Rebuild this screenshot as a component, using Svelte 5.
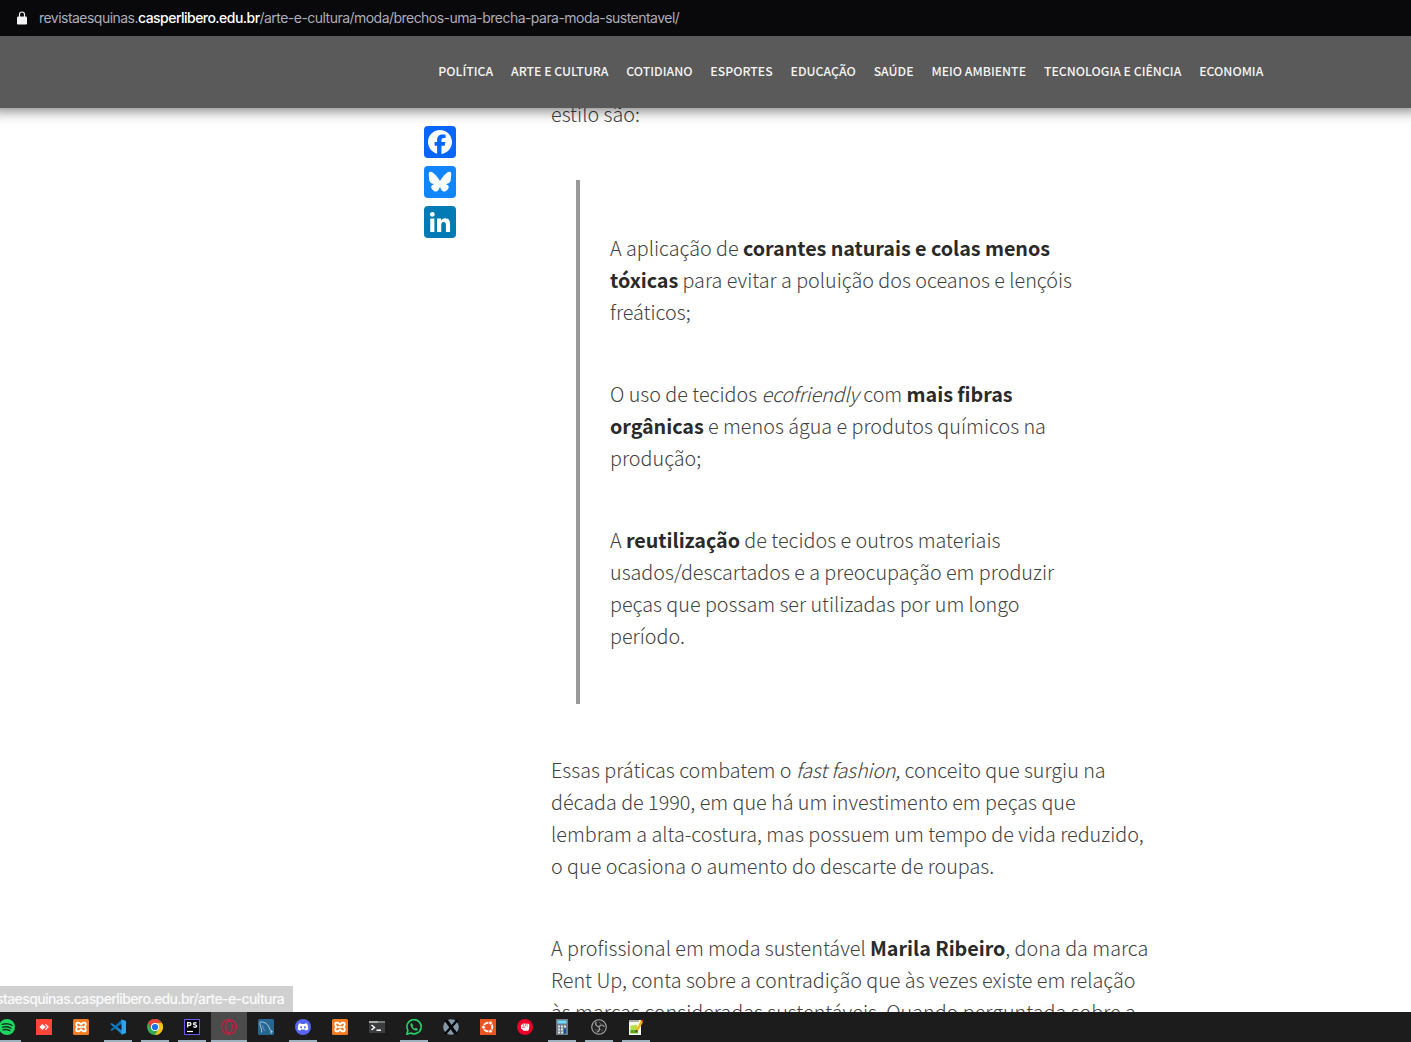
<script>
  const sections = ['Política', 'Arte e cultura', 'Cotidiano', 'Esportes', 'Educação', 'Saúde', 'Meio ambiente', 'Tecnologia e ciência', 'Economia'];

  const quote = [
    [
      [{ t: 'A aplicação de ' }, { b: 'corantes naturais e colas menos' }],
      [{ b: 'tóxicas' }, { t: ' para evitar a poluição dos oceanos e lençóis' }],
      [{ t: 'freáticos;' }]
    ],
    [
      [{ t: 'O uso de tecidos ' }, { i: 'ecofriendly' }, { t: ' com ' }, { b: 'mais fibras' }],
      [{ b: 'orgânicas' }, { t: ' e menos água e produtos químicos na' }],
      [{ t: 'produção;' }]
    ],
    [
      [{ t: 'A ' }, { b: 'reutilização' }, { t: ' de tecidos e outros materiais' }],
      [{ t: 'usados/descartados e a preocupação em produzir' }],
      [{ t: 'peças que possam ser utilizadas por um longo' }],
      [{ t: 'período.' }]
    ]
  ];

  const body = [
    [
      [{ t: 'Essas práticas combatem o ' }, { i: 'fast fashion,' }, { t: ' conceito que surgiu na' }],
      [{ t: 'década de 1990, em que há um investimento em peças que' }],
      [{ t: 'lembram a alta-costura, mas possuem um tempo de vida reduzido,' }],
      [{ t: 'o que ocasiona o aumento do descarte de roupas.' }]
    ],
    [
      [{ t: 'A profissional em moda sustentável ' }, { b: 'Marila Ribeiro' }, { t: ', dona da marca' }],
      [{ t: 'Rent Up, conta sobre a contradição que às vezes existe em relação' }],
      [{ t: 'às marcas consideradas sustentáveis. Quando perguntada sobre a' }]
    ]
  ];

  const apps = [
    { id: 'spotify', open: true },
    { id: 'anydesk' },
    { id: 'xampp' },
    { id: 'vscode', open: true },
    { id: 'chrome', open: true },
    { id: 'phpstorm', open: true },
    { id: 'opera', open: true, active: true },
    { id: 'mysql' },
    { id: 'discord', open: true },
    { id: 'xampp' },
    { id: 'terminal' },
    { id: 'whatsapp', open: true },
    { id: 'xserver' },
    { id: 'ubuntu' },
    { id: 'fist' },
    { id: 'calculator', open: true },
    { id: 'obs', open: true },
    { id: 'notepad', open: true }
  ];
</script>

{#snippet paragraph(lines)}
  <p>
    {#each lines as line}
      <span class="line">{#each line as run}{#if run.b}<strong>{run.b}</strong>{:else if run.i}<em>{run.i}</em>{:else}{run.t}{/if}{/each}</span>
    {/each}
  </p>
{/snippet}

{#snippet appIcon(id)}
  <svg class="app-icon" viewBox="0 0 16 16" fill="none">
    {#if id === 'spotify'}
      <circle cx="8" cy="8" r="8" fill="#1ed760" />
      <path d="M3.2 5.4c3.3-1 6.9-.7 9.7.9M3.7 8.2c2.8-.8 5.700-.5 8.200.9M4.200 10.800c2.300-.6 4.600-.4 6.700.8" stroke="#16301f" stroke-width="1.400" stroke-linecap="round" />
    {:else if id === 'anydesk'}
      <rect width="16" height="16" fill="#ff4438" />
      <path d="m6.400 5 3 3-3 3-3-3z" fill="#fff" />
      <path d="m8.900 5.600.9-.7L13 8l-3.200 3.100-.9-.7L11.300 8z" fill="#fff" />
      <path d="m8.300 5.600 2.400 2.400-2.400 2.400L10 8z" fill="#ffd5d2" />
    {:else if id === 'xampp'}
      <rect width="16" height="16" rx="1.500" fill="#f47a20" />
      <path d="M4.200 3.700h1.900L8 5.600l1.900-1.900h1.900c1.400 0 1.400 3.200-.5 4.300 1.900 1.100 1.900 4.300.5 4.300H9.900L8 10.400l-1.900 1.900H4.200c-1.400 0-1.400-3.200.5-4.300-1.900-1.100-1.900-4.300-.5-4.300Z" stroke="#fff" stroke-width="1.900" stroke-linejoin="round" />
      <path d="M5.500 8h5" stroke="#fff" stroke-width="1.800" />
    {:else if id === 'vscode'}
      <path d="m.3 5 1.400-1L12 11.400v4.200z" fill="#1685cf" />
      <path d="m.3 11 1.400 1L12 4.600V.4z" fill="#0873b9" />
      <path d="M11.500.2 16 2v12l-4.500 1.800z" fill="#2ba5ee" />
    {:else if id === 'chrome'}
      <circle cx="8" cy="8" r="8" fill="#34a853" />
      <path d="M1.070 4A8 8 0 0 1 14.930 4H8a4 4 0 0 0-3.460 6z" fill="#ea4335" />
      <path d="M14.930 4A8 8 0 0 1 8 16l3.460-6A4 4 0 0 0 8 4z" fill="#fbc116" />
      <circle cx="8" cy="8" r="4" fill="#fff" />
      <circle cx="8" cy="8" r="3.100" fill="#1a73e8" />
    {:else if id === 'phpstorm'}
      <rect x=".5" y=".5" width="15" height="15" fill="#050506" stroke="#6b57ff" />
      <path d="M3.700 8.500V3.700h1.900a1.300 1.300 0 0 1 0 2.700H3.700M12.500 4.200c-1.200-.8-3-.5-3 .7 0 1.400 3.200.7 3.200 2.200 0 1.300-2.200 1.500-3.500.5" stroke="#fff" stroke-width="1.300" />
      <path d="M3 12.500h6" stroke="#fff" stroke-width="1.200" />
    {:else if id === 'opera'}
      <circle cx="8" cy="8" r="7.400" stroke="#d51c43" stroke-width="1.100" />
      <ellipse cx="8" cy="8" rx="3.300" ry="6" stroke="#d51c43" stroke-width="1.200" />
      <path d="M6 1.300c-4.600 2.500-4.600 10.900 0 13.400M10 1.300c4.600 2.500 4.600 10.900 0 13.400" stroke="#a41b3b" stroke-width=".7" />
    {:else if id === 'mysql'}
      <rect width="16" height="16" rx="1.500" fill="#246793" />
      <path d="M3.600 13.500c.6-3.200-1.300-5-1.700-8.500-.2-2 .8-2.800 2.500-1.900 4.200.5 6.200 3.300 7.400 7.500l2.700 2-2 .2 1.200 1.900" stroke="#c1d7e3" stroke-width=".9" />
      <path d="M4.500 6c.3 2.300.9 3.800 2.300 5.800" stroke="#7fabc5" stroke-width=".8" />
    {:else if id === 'discord'}
      <circle cx="8" cy="8" r="8" fill="#5865f2" />
      <path d="M5.600 4.300c-1 .2-1.600.5-1.900.8-.8 1.800-1.100 3.600-.9 5.300.9.800 1.800 1.100 2.500 1.200l.7-1.100h4l.7 1.100c.7-.1 1.600-.4 2.500-1.200.2-1.700-.1-3.500-.9-5.300-.3-.3-.9-.6-1.900-.8l-.5.8H6.100z" fill="#fff" />
      <ellipse cx="6.100" cy="8.300" rx="1" ry="1.150" fill="#5865f2" />
      <ellipse cx="9.900" cy="8.300" rx="1" ry="1.150" fill="#5865f2" />
    {:else if id === 'terminal'}
      <path d="M0 2h16v12H0z" fill="#3b3d3e" />
      <path d="M0 2h16v2H0z" fill="#777b7c" />
      <path d="M0 2h9v2H0z" fill="#aaa" />
      <path d="m2.500 6 3 2.500-3 2.500M7.500 11.200h4.500" stroke="#fff" stroke-width="1.500" />
    {:else if id === 'whatsapp'}
      <path d="m.9 15.200 1-3.900a7.100 7.100 0 1 1 2.800 2.700z" stroke="#25d366" stroke-width="1.600" />
      <path d="M5.500 4.100c-.9.300-1.200 1.300-.9 2.300.8 2.700 2.800 4.700 5.200 5.100 1.100.2 2-.6 2.100-1.600L9.800 8.800l-.9 1C7.800 9.300 7 8.400 6.500 7.400l.8-.9z" fill="#25d366" />
    {:else if id === 'xserver'}
      <circle cx="8" cy="8" r="7.800" fill="#8499aa" />
      <path d="M1 1h4l10 14h-4z" fill="#050505" />
      <path d="M14.500 1 2 15" stroke="#050505" stroke-width="2.400" />
    {:else if id === 'ubuntu'}
      <rect width="16" height="16" fill="#e95420" />
      <circle cx="8" cy="8" r="4.300" stroke="#fff" stroke-width="1.900" />
      <g fill="#fff" stroke="#e95420" stroke-width=".9">
        <circle cx="3.500" cy="8.200" r="1.900" /><circle cx="10.500" cy="4" r="1.900" /><circle cx="10.500" cy="12.200" r="1.900" />
      </g>
    {:else if id === 'fist'}
      <circle cx="8" cy="8" r="8" fill="#eb0029" />
      <path d="M3.900 6.600 6 4.500l5.700.3.700 1.300-.4 4.500-1.200 1.200H6.700L4 9.300z" fill="#fff" />
      <path d="M6.300 4.500v3M8.200 4.500v3M10.100 4.500v3M4.800 8.300h3.400" stroke="#eb0029" stroke-width=".6" />
    {:else if id === 'calculator'}
      <path d="M2 0h12v16H2z" fill="#6d7b84" />
      <path d="M3.500 1.500h9v3h-9z" fill="#6bdcff" />
      <path d="M4 6.500h2v2H4zm3 0h2v2H7zm3 0h2v2h-2zm-6 3h2v2H4zm3 0h2v2H7zm-3 3h2v2H4zm3 0h2v2H7z" fill="#e0e6e9" />
      <path d="M10 9.500h2v5h-2z" fill="#0b4f9b" />
    {:else if id === 'obs'}
      <circle cx="8" cy="8" r="7.300" fill="#242424" stroke="#a9a9a9" stroke-width="1.100" />
      <path d="M7.800 7.700C5 7.400 4 5.300 5.200 2.800M8 7.800c1.500-2.400 4-2.400 5.300-.1M7.900 8c1.400 2.500.3 4.700-2.200 5.100" stroke="#a9a9a9" stroke-width="1.200" />
      <path d="M8 3.200c1.500.4 2.200 1.600 2 3M3.500 10.300c1 1 2.300 1 3.200.2M12.200 11c-1 .7-2.300.4-3-.8" stroke="#6e6e6e" stroke-width=".8" />
    {:else if id === 'notepad'}
      <path d="M1 1h12v15H1z" fill="#f5f8ed" />
      <path d="M2.500 6.500 9 6l1 8-7.500.3z" fill="#b8dc45" />
      <path d="M2.500 11h7.500v3.300H2.500z" fill="#58a91c" />
      <path d="M2 1v2m2-2v2m2-2v2m2-2v2m2-2v2" stroke="#353b35" stroke-width=".8" />
      <path d="m14 2.200-5 9.300" stroke="#f3b812" stroke-width="2.500" />
      <path d="m13.600.5 2 1.300-.8 1.200-2-1.200z" fill="#df3425" />
      <path d="m7.900 10.800 2.100 1.300-2.400 1.500z" fill="#5c3915" />
    {/if}
  </svg>
{/snippet}

<div class="screen">
  <div class="address-bar">
    <svg class="lock" viewBox="0 0 10 14">
      <path d="M2.500 7V3.500a2.500 2.500 0 0 1 5 0V7" fill="none" stroke="#f3f3f5" stroke-width="1.200" />
      <rect y="5.500" width="10" height="8" rx="1.200" fill="#f3f3f5" />
    </svg>
    <span class="url">revistaesquinas.<b>casperlibero.edu.br</b>/arte-e-cultura/moda/brechos-uma-brecha-para-moda-sustentavel/</span>
  </div>

  <nav>
    {#each sections as section}
      <a href="#top">{section}</a>
    {/each}
  </nav>

  <main>
    <aside>
      <svg viewBox="0 0 32 32">
        <rect width="32" height="32" rx="4" fill="#0866ff" />
        <path fill="#fff" d="M28 16c0-6.627-5.373-12-12-12S4 9.373 4 16c0 5.628 3.875 10.350 9.101 11.647v-7.980h-2.474V16H13.100v-1.580c0-4.085 1.849-5.978 5.859-5.978.760 0 2.072.150 2.608.298v3.325c-.283-.030-.775-.045-1.386-.045-1.967 0-2.728.745-2.728 2.683V16h3.920l-.673 3.667h-3.247v8.245C23.395 27.195 28 22.135 28 16" />
      </svg>
      <svg viewBox="0 0 32 32">
        <rect width="32" height="32" rx="4" fill="#1185fe" />
        <path fill="#fff" d="M9.652 7.195c2.570 1.930 5.334 5.841 6.349 7.940 1.015-2.099 3.779-6.010 6.348-7.940 1.854-1.392 4.858-2.469 4.858.958 0 .684-.393 5.749-.623 6.572-.801 2.861-3.719 3.591-6.315 3.149 4.537.772 5.691 3.330 3.198 5.888-4.733 4.857-6.803-1.219-7.334-2.775-.097-.285-.143-.419-.143-.305 0-.114-.046.020-.143.305-.530 1.557-2.600 7.633-7.334 2.775-2.492-2.558-1.339-5.116 3.198-5.888-2.596.442-5.514-.288-6.315-3.149-.230-.823-.623-5.888-.623-6.572 0-3.427 3.004-2.350 4.858-.958z" />
      </svg>
      <svg viewBox="0 0 32 32">
        <rect width="32" height="32" rx="4" fill="#007bb5" />
        <path fill="#fff" d="M6.227 12.610h4.190v13.480h-4.190zm2.095-6.700a2.430 2.430 0 0 1 0 4.860c-1.344 0-2.428-1.090-2.428-2.430s1.084-2.430 2.428-2.430m4.720 6.700h4.020v1.840h.058c.560-1.058 1.927-2.176 3.965-2.176 4.238 0 5.020 2.792 5.020 6.420v7.395h-4.183v-6.560c0-1.564-.030-3.574-2.178-3.574-2.180 0-2.514 1.700-2.514 3.460v6.668h-4.187z" />
      </svg>
    </aside>
    <article>
      <p><span class="line">estilo são:</span></p>
      <blockquote>
        {#each quote as lines}{@render paragraph(lines)}{/each}
      </blockquote>
      {#each body as lines}{@render paragraph(lines)}{/each}
    </article>
  </main>

  <div class="status">https://revistaesquinas.casperlibero.edu.br/arte-e-cultura</div>

  <footer>
    {#each apps as app}
      <div class={['app', app.open && 'open', app.active && 'active']}>{@render appIcon(app.id)}</div>
    {/each}
  </footer>
</div>

<style>
  :global(body) { margin: 0; overflow: hidden; }
  .screen {
    position: relative;
    display: flex;
    flex-direction: column;
    width: 1411px;
    height: 1042px;
    overflow: hidden;
    background: #fff;
  }
  .address-bar {
    position: relative;
    z-index: 2;
    flex: none;
    display: flex;
    align-items: center;
    box-sizing: border-box;
    height: 36px;
    padding-left: 17px;
    background: #09090b;
  }
  .lock { width: 10px; height: 14px; margin: 0 12px 1px 0; }
  .url {
    font: 14px/20px Inter, 'Liberation Sans', sans-serif;
    letter-spacing: -.53px;
    color: #aeacb8;
    white-space: nowrap;
  }
  .url b { font-weight: 500; color: #fff; }
  nav {
    position: relative;
    z-index: 1;
    flex: none;
    display: flex;
    gap: 17.900px;
    align-items: center;
    box-sizing: border-box;
    height: 72px;
    padding: 0 0 2px 438.300px;
    background: #5a5a5a;
    box-shadow: 0 -5px 12px 8px rgba(0, 0, 0, .5);
  }
  nav a {
    font: 500 12.300px/20px 'Noto Sans CJK SC', sans-serif;
    color: #f5f5f5;
    text-decoration: none;
    text-transform: uppercase;
    white-space: nowrap;
  }
  main {
    flex: 1;
    display: flex;
    align-items: flex-start;
    min-height: 0;
    overflow: hidden;
    padding-left: 424px;
  }
  aside { display: flex; flex-direction: column; gap: 8px; width: 127px; padding-top: 18px; }
  aside svg { width: 32px; height: 32px; }
  article {
    width: 610px;
    margin-top: -10px;
    font: 300 19.750px/32px 'Noto Sans CJK SC', sans-serif;
    color: #424242;
  }
  p { margin: 0 0 50px; }
  .line { display: block; height: 32px; white-space: nowrap; }
  strong { font-weight: 700; letter-spacing: -.05px; color: #2a2a2a; }
  em { letter-spacing: -.16px; }
  blockquote {
    display: flow-root;
    margin: 0 0 50px 25px;
    padding: 52px 0 2px 30px;
    border-left: 4px solid #999;
  }
  .status {
    position: absolute;
    left: 0;
    bottom: 30px;
    box-sizing: border-box;
    display: flex;
    justify-content: flex-end;
    width: 293px;
    height: 26px;
    padding-right: 9px;
    overflow: hidden;
    background: #d0d0d0;
    font: 500 14px/26px Inter, 'Liberation Sans', sans-serif;
    letter-spacing: -.6px;
    color: #fafafa;
    white-space: nowrap;
  }
  footer {
    flex: none;
    display: flex;
    height: 30px;
    gap: 1px;
    margin-left: -11px;
    padding-right: 11px;
    background: #1c1c1c;
  }
  .app {
    flex: none;
    position: relative;
    display: flex;
    justify-content: center;
    width: 36px;
    height: 30px;
    padding-top: 7px;
    box-sizing: border-box;
  }
  .app-icon { width: 16px; height: 16px; }
  .open::after {
    content: '';
    position: absolute;
    left: 4px;
    bottom: 0;
    width: 28px;
    height: 2px;
    background: #9db0bd;
  }
  .active { background: #4b4b4b; }
  .active::after { left: 0; width: 36px; }
</style>
